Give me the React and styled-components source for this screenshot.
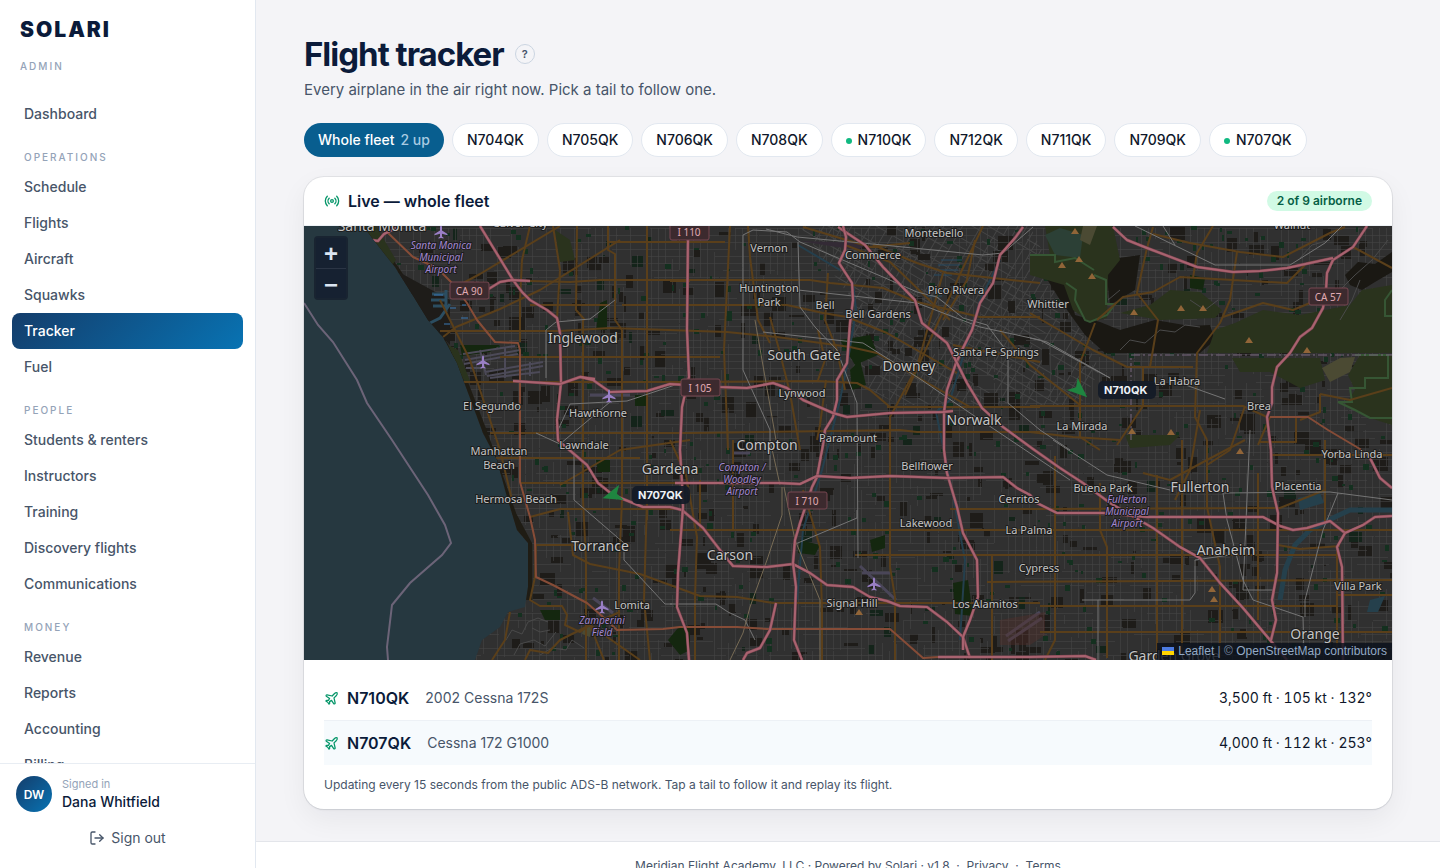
import { useState } from "react";
import styled, { createGlobalStyle } from "styled-components";
import { LogOut, Plane, Radio } from "lucide-react";

const GlobalStyle = createGlobalStyle`
  * {
    box-sizing: border-box;
  }
  body {
    margin: 0;
    font-family: Inter, "Liberation Sans", sans-serif;
    font-size: 14px;
    color: #0f172a;
    background: #f4f4f7;
  }
  button {
    font: inherit;
    cursor: pointer;
  }
  a {
    color: inherit;
    text-decoration: none;
  }
`;

const Shell = styled.div`
  display: grid;
  grid-template-columns: 256px 1fr;
  height: 100vh;
`;

const Sidebar = styled.aside`
  display: flex;
  flex-direction: column;
  min-height: 0;
  background: #fff;
  border-right: 1px solid #e2e8f0;
`;

const Brand = styled.div`
  padding: 16px 20px;
`;

const Wordmark = styled.div`
  font-size: 21px;
  font-weight: 900;
  line-height: 28px;
  letter-spacing: 2px;
  color: #0b1b3a;
`;

const Role = styled.div`
  margin-top: 14px;
  font-size: 10px;
  font-weight: 500;
  line-height: 16px;
  letter-spacing: 2px;
  color: #94a3b8;
`;

const Nav = styled.nav`
  flex: 1;
  min-height: 0;
  padding: 6px 12px;
  overflow-y: auto;
  scrollbar-width: none;
`;

const NavHeading = styled.h2`
  margin: 0;
  padding: 18px 12px 4px;
  font-size: 10px;
  font-weight: 500;
  line-height: 15px;
  letter-spacing: 2px;
  color: #94a3b8;
`;

const NavLink = styled.a`
  display: block;
  padding: 8px 12px;
  border-radius: 8px;
  font-weight: 500;
  line-height: 20px;
  color: ${(props) => (props.$active ? "#fff" : "#475569")};
  background: ${(props) =>
    props.$active ? "linear-gradient(135deg, #143d6b, #0873b3)" : "none"};
`;

const Account = styled.div`
  height: 105px;
  padding: 12px 16px;
  border-top: 1px solid #e8edf3;
`;

const AccountRow = styled.div`
  display: flex;
  align-items: center;
  gap: 10px;
`;

const Avatar = styled.div`
  display: grid;
  place-items: center;
  width: 36px;
  height: 36px;
  border-radius: 50%;
  font-size: 12px;
  font-weight: 600;
  color: #fff;
  background: linear-gradient(135deg, #143d6b, #0873b3);
`;

const SignedIn = styled.div`
  font-size: 11px;
  line-height: 16px;
  color: #94a3b8;
`;

const UserName = styled.div`
  font-weight: 500;
  line-height: 20px;
  color: #0b1b3a;
`;

const SignOut = styled.button`
  display: flex;
  align-items: center;
  justify-content: center;
  gap: 6px;
  width: 100%;
  margin-top: 8px;
  padding: 8px;
  border: 0;
  line-height: 20px;
  color: #475569;
  background: none;
`;

const Main = styled.div`
  display: flex;
  flex-direction: column;
  min-width: 0;
  overflow-y: auto;
  scrollbar-width: none;
`;

const Content = styled.main`
  padding: 32px 48px;
`;

const TitleRow = styled.div`
  display: flex;
  align-items: center;
  gap: 11px;
`;

const Title = styled.h1`
  margin: 0;
  font-size: 33px;
  font-weight: 700;
  line-height: 44px;
  letter-spacing: -1px;
  color: #0b1b3a;
`;

const HelpButton = styled.button`
  width: 20px;
  height: 20px;
  padding: 0;
  border: 1px solid #cbd5e1;
  border-radius: 50%;
  font-size: 11px;
  font-weight: 600;
  line-height: 18px;
  color: #475569;
  background: none;
`;

const Subtitle = styled.p`
  margin: 3px 0 22px;
  font-size: 15px;
  font-variation-settings: "opsz" 24;
  line-height: 22px;
  color: #475569;
`;

const Chips = styled.div`
  display: flex;
  flex-wrap: wrap;
  gap: 8px;
  margin-bottom: 20px;
`;

const Chip = styled.button`
  display: flex;
  align-items: center;
  gap: 6px;
  height: 34px;
  padding: 0 14px 1px;
  border: ${(props) => (props.$active ? "0" : "1px solid #e2e8f0")};
  border-radius: 17px;
  font-weight: 500;
  line-height: 20px;
  color: ${(props) => (props.$active ? "#fff" : "#0f172a")};
  background: ${(props) => (props.$active ? "#085e8f" : "#fff")};
`;

const ChipCount = styled.span`
  color: #a9cbe2;
`;

const LiveDot = styled.span`
  width: 6px;
  height: 6px;
  margin-top: 2px;
  border-radius: 50%;
  background: #10b981;
`;

const Card = styled.section`
  overflow: hidden;
  border-radius: 20px;
  background: #fff;
  box-shadow: 0 0 0 1px rgba(15, 23, 42, 0.07), 0 1px 2px rgba(15, 23, 42, 0.08),
    0 10px 28px rgba(15, 23, 42, 0.06);
`;

const CardHeader = styled.header`
  display: flex;
  align-items: center;
  gap: 8px;
  height: 49px;
  padding: 0 20px;
  border-bottom: 1px solid #eef2f6;
  color: #059669;
`;

const CardTitle = styled.h2`
  flex: 1;
  margin: 0;
  font-size: 16px;
  font-weight: 600;
  line-height: 24px;
  color: #0b1b3a;
`;

const Badge = styled.span`
  padding: 0 10px;
  border-radius: 10px;
  font-size: 12px;
  font-weight: 600;
  line-height: 20px;
  color: #065f46;
  background: #d1fae5;
`;

const MapFrame = styled.div`
  position: relative;
  height: 434px;
  background: #263840;
`;

const MapSvg = styled.svg`
  display: block;
  width: 100%;
  height: 100%;
`;

const MapText = styled.text`
  font-family: "Noto Sans", sans-serif;
  font-size: ${(props) => props.$size || 11}px;
  font-style: ${(props) => (props.$airport ? "italic" : "normal")};
  fill: ${(props) => (props.$airport ? "#a387cf" : "#c4c4c4")};
  stroke: #1c1c1c;
  stroke-width: 2px;
  stroke-linejoin: round;
  paint-order: stroke;
  text-anchor: middle;
`;

const ShieldText = styled.text`
  font-family: "Noto Sans", sans-serif;
  font-size: 10px;
  fill: #e0aab3;
  text-anchor: middle;
`;

const TailText = styled.text`
  font-family: Inter, sans-serif;
  font-size: 11px;
  font-weight: 700;
  fill: #eef2f7;
`;

const ZoomControl = styled.div`
  position: absolute;
  top: 10px;
  left: 10px;
  display: flex;
  flex-direction: column;
  border: 2px solid rgba(20, 29, 43, 0.7);
  border-radius: 4px;
`;

const ZoomButton = styled.button`
  width: 30px;
  height: 30px;
  padding: 2px 0 0;
  border: 0;
  font: bold 24px/28px "Liberation Sans", Arial, sans-serif;
  color: #dbe6f3;
  background: #162131;

  & + & {
    border-top: 1px solid #2b3545;
  }
`;

const Attribution = styled.div`
  position: absolute;
  right: 0;
  bottom: 0;
  padding: 0 5px;
  font: 12px/17px "Liberation Sans", Arial, sans-serif;
  color: #7688a0;
  background: rgba(11, 17, 28, 0.82);

  a {
    color: #93aac6;
  }
  svg {
    margin-right: 4px;
  }
`;

const Fleet = styled.ul`
  margin: 0;
  padding: 16px 20px 0;
  list-style: none;
`;

const FleetRow = styled.li`
  display: flex;
  align-items: center;
  gap: 16px;
  height: 44px;
  line-height: 20px;

  & + & {
    height: 45px;
    border-top: 1px solid #edf1f6;
    background: #f6fafd;
  }
`;

const TailButton = styled.button`
  display: flex;
  align-items: center;
  gap: 8px;
  padding: 0;
  border: 0;
  font-size: 16px;
  font-weight: 600;
  color: #0b1b3a;
  background: none;

  svg {
    color: #059669;
  }
`;

const Model = styled.span`
  flex: 1;
  color: #475569;
`;

const Telemetry = styled.span`
  font-variant-numeric: tabular-nums;
`;

const Note = styled.p`
  margin: 0;
  padding: 12px 20px 16px;
  font-size: 12px;
  line-height: 16px;
  color: #475569;
`;

const Footer = styled.footer`
  padding: 16px;
  border-top: 1px solid #e3e5ea;
  font-size: 12px;
  line-height: 16px;
  text-align: center;
  white-space: pre;
  color: #475569;
  background: #fff;
`;

const navGroups = [
  { items: ["Dashboard"] },
  {
    title: "OPERATIONS",
    items: ["Schedule", "Flights", "Aircraft", "Squawks", "Tracker", "Fuel"],
  },
  {
    title: "PEOPLE",
    items: [
      "Students & renters",
      "Instructors",
      "Training",
      "Discovery flights",
      "Communications",
    ],
  },
  { title: "MONEY", items: ["Revenue", "Reports", "Accounting", "Billing"] },
];

const tails = [
  "N704QK",
  "N705QK",
  "N706QK",
  "N708QK",
  "N710QK",
  "N712QK",
  "N711QK",
  "N709QK",
  "N707QK",
];

const airborne = [
  { tail: "N710QK", model: "2002 Cessna 172S", alt: "3,500", kt: 105, hdg: 132, x: 1079, y: 390 },
  { tail: "N707QK", model: "Cessna 172 G1000", alt: "4,000", kt: 112, hdg: 253, x: 613, y: 495 },
];

const land =
  "M363 226L380 248L395 267L412 294L428 320L443 337L450 350L457 363L467 390L483 433L497 460L507 497L517 530L528 543L528 587L525 607L508 612L500 627L482 640L475 660H1392V226Z";

const freeways = [
  "M480 226L513 280L522 292L530 300L547 310L557 318L560 333L561 383L557 420L558 440L567 448L587 465L598 483L613 495L643 507L670 507L682 510L703 528L720 550L733 566L767 567L793 564L810 573L827 585L853 587L870 597L887 601L900 606L927 607L947 622L963 637L970 658",
  "M1023 227L1015 238L1000 255L993 283L980 303L972 330L963 348L956 363L947 390L944 412V450L947 473L957 507L963 533L977 560L978 597L970 620L963 637V650",
  "M838 227L865 245L883 267L915 300L922 323L947 343L957 363L967 383L982 408L1003 427L1033 449L1060 468L1083 483L1110 503L1153 528L1180 547L1200 558L1220 583L1243 608L1270 640L1287 660",
  "M843 226L846 237L845 250L839 263L852 283L853 300L850 323L847 363L837 380V400L833 417L825 430L823 445L817 477L812 487L800 523L795 540L793 563L796 587L794 640L802 660",
  "M688 240L687 330L689 377L682 407L680 450L682 483L683 507L678 573L677 607L687 633L689 660",
  "M513 381L560 384L580 377L595 379M580 377L593 380L610 392L647 391L670 384L720 387L747 388L773 383L787 388L803 400L833 413L847 417L890 413L943 412L953 411",
  "M675 483H780L800 484L817 476L850 478L890 476L947 478L1003 477L1017 488L1030 495L1037 503L1057 513H1103L1147 517H1263L1280 526L1293 530L1307 528L1330 521L1345 533L1363 525L1375 517L1392 516",
  "M1345 533L1337 547L1342 567L1343 660",
  "M1367 226L1353 247L1333 260L1327 273L1326 290L1323 308L1312 328L1300 337L1290 353L1277 367L1272 387V403L1267 417L1271 450L1272 487L1278 513L1277 573L1272 600L1276 620L1271 640",
  "M1113 227L1127 240L1147 248L1197 267L1233 272L1260 271L1287 268L1333 258",
  "M1370 458L1380 478L1392 488",
  "M776 603L770 630L760 648L747 653L743 660",
  "M487 290L500 282L512 280L530 281",
  "M372 240L378 241L384 234L396 228",
  "M938 657H1030L1085 656L1096 660",
];

const highways = [
  "M386 231L413 257L437 268L452 283L467 303L477 320L495 342L518 343L520 350V482L530 517L535 540L536 577L553 585L587 603L603 617L617 630L663 629L680 627L737 627L767 629H890L923 658L938 657",
  "M1270 417H1308L1328 430L1360 449L1370 458",
];

const arterials = [
  "M530 226L522 260L520 300V342M553 226L560 270L557 318M577 226L576 310L585 320M608 226V250L615 254V320L622 330M647 226V520M583 320V500L586 560V660M622 330V500L619 570V660M647 500L644 600L650 660M730 226L724 350L728 450M748 226L750 257L758 320L770 343",
  "M607 242H725M690 281H670M530 281L570 282L600 280H810L830 283L883 288L917 302L980 317H1040M530 305H610M622 305H787L823 313L847 317L887 333L957 373",
  "M443 337L456 327L500 309L540 290L620 240M440 331H560L610 328L727 332L777 337L850 347L877 353L917 377L970 407M500 357H720M462 382L680 382L817 381L857 383L870 390L890 407",
  "M490 433H690L900 430L917 432H1040M496 458H640M520 483H680M530 517L560 509H675M568 512L573 555L590 564L640 574L700 596L737 597L773 603H1040M536 545H584M560 485L620 450L690 440",
  "M450 290L480 274L560 226M440 300L470 360L490 420L500 450L512 500M887 407H1040M943 273L917 367L890 417V480M770 317L780 353L790 393L800 450M828 273L825 320L837 350L845 390",
  "M803 227L870 247L910 243M873 245L917 263L947 273L1040 283M975 240L967 280L943 320M845 245L890 262L950 320M818 380L825 360L818 330M817 440L820 425L826 380",
  "M983 226L962 270L930 340L905 395M1000 330L1030 365L1080 405M953 345L1040 362M1030 313L1093 350L1127 367H1193",
  "M1153 227L1147 248L1137 293L1158 320L1150 367M1213 226L1197 253L1193 278M1237 252L1230 300L1220 323L1197 353L1195 417L1207 440M1097 320L1123 297L1153 292L1180 277L1233 280L1287 283L1307 263L1333 258M1095 323L1080 363V437L1100 450",
  "M1030 406H1243L1267 417M1030 432L1073 437L1120 440M1143 367V406L1117 445M1223 317L1263 303L1293 310L1310 303M1153 234L1190 243L1240 252L1283 257L1330 233L1345 227M1353 247L1392 268M1320 394L1350 400L1392 388M1320 394V412L1300 420",
  "M670 530H1392M855 555H1337M987 582L1392 580M950 509H1040L1280 508L1325 490M1040 606H1337M1040 632H1392M700 480V530M733 440V530M803 490L820 547L822 610V660M890 447V567L895 597V660M992 555V660M670 440L686 475L697 537L695 597V660",
  "M1055 456V640L1045 660M1100 483V530L1107 547V658M1157 475V658M1182 440V658M1207 440V507L1220 567V658M1258 473V620M1337 546V656M1325 440V523M1143 473L1170 480L1207 460L1245 440M1270 455L1392 455M1278 545L1300 549L1340 546M1337 595H1392",
  "M536 545L535 577L530 600L540 606H562L567 615L565 625L580 632L590 625L620 612M510 612L505 640L492 660M525 660L530 650L548 653L560 640L590 625L604 660M590 625L640 660M1200 410L1190 470L1175 500M1245 406L1230 450L1207 465M1270 417L1258 445M1296 417V442H1260",
];

const rails = [
  "M743 370V235L753 230L787 232L800 242L883 277L917 292L937 297L963 318L987 325L1008 353V403L1040 430L1070 450",
  "M766 229L797 237L883 245L983 255L1003 253L1033 227M798 242L800 307L815 327L837 350L857 403L858 558M743 370L770 430V470M798 290L917 303L980 327L1040 340L1110 378M763 332L863 343L917 377L970 413L1070 480",
  "M1053 440L1107 475L1170 490M1223 493L1330 492L1392 500M1223 493L1227 520L1243 580L1253 600L1303 617L1304 660M1338 493L1323 530L1305 600V617M1082 600H1190L1195 593V560L1230 555M1098 600V660",
  "M546 378V330L556 322L590 319L615 300M558 430L570 404L627 401L678 384M536 433L560 444L610 402M574 455V500L624 543V560L665 604H672M858 555M793 545L857 518V510M670 604H716L728 612L745 620L755 640",
  "M1135 226L1215 265H1290L1325 243L1342 226M1163 226L1175 245M1030 338L1047 342L1110 378M1180 383L1225 399M1250 430L1243 590L1274 590",
];

const paleRails = [
  "M782 487V515L767 560L750 607L743 633L730 660M770 440L780 485M784 487L795 540L820 600V660M755 320L776 440",
];

// winding residential streets in the Palos Verdes and Puente hills
const hillRoads = [
  "M506 640L512 630L522 634L528 622L538 618L548 622M514 655L520 644L534 640L545 646L556 632M540 655L552 648L566 650L572 640L584 648M532 628L540 632L550 630",
  "M1120 350L1130 340L1145 343L1160 330L1175 332L1185 325L1200 327M1108 300L1120 290M1190 300L1205 310L1218 300M1340 290L1355 275L1372 260L1388 240M1300 258L1312 245L1330 240M1340 320L1352 300L1360 280",
];

const parks = [
  "M1045 226H1113L1120 260L1108 275L1107 318L1090 322L1073 310L1064 285L1030 275V255H1050Z",
  "M1207 353L1215 330L1235 323L1263 310L1300 315L1350 305L1362 290L1392 285V353Z",
  "M1232 358H1320L1325 380L1300 388L1270 372H1240Z",
  "M1360 355H1392V425L1370 418L1345 405L1355 390L1348 375Z",
  "M1120 313L1150 305L1170 290L1200 292L1222 310L1215 318L1160 320Z",
  "M448 345L458 350L470 381L464 381Z",
  "M364 226H376L396 260L390 268Z",
  "M1125 435H1180L1170 445L1130 448Z",
  "M555 230L570 240L575 260L560 262Z",
];

const woods = [
  "M600 303L607 300V330H596Z",
  "M840 340L870 335L878 355L855 365Z",
  "M800 540L820 545L815 555L798 553Z",
  "M953 583L968 580L973 616L955 614Z",
  "M1190 275L1205 278L1203 290L1190 288Z",
  "M635 395H647V406H635Z",
  "M596 460H610V472H598Z",
  "M540 610H560V620H545Z",
  "M668 640L678 628H690V650L680 655Z",
  "M850 370L860 360L866 385L852 390Z",
  "M460 345H500L490 352L462 356Z",
  "M870 540L885 535V548L872 552Z",
];

const darkHills = [
  "M1040 268L1068 282L1075 315L1100 322L1120 330L1155 320L1190 326L1210 325L1215 340L1200 353H1105L1085 335L1060 300Z",
  "M1105 260L1140 255L1135 290L1110 305Z",
  "M1345 275L1358 262L1375 264L1392 252V272L1375 282L1362 290L1350 285Z",
  "M1360 380L1375 388L1365 400Z",
];

const labels = [
  ["Santa Monica", 382, 231, 14],
  ["Culver City", 520, 227, 11],
  ["Inglewood", 583, 343, 14],
  ["El Segundo", 492, 410, 11],
  ["Hawthorne", 598, 417, 11],
  ["Lawndale", 584, 449, 11],
  ["Manhattan", 499, 455, 11],
  ["Beach", 499, 469, 11],
  ["Hermosa Beach", 516, 503, 11],
  ["Torrance", 600, 551, 14],
  ["Lomita", 632, 609, 11],
  ["Gardena", 670, 474, 14],
  ["Carson", 730, 560, 14],
  ["Compton", 767, 450, 14],
  ["Vernon", 769, 252, 11],
  ["Huntington", 769, 292, 11],
  ["Park", 769, 306, 11],
  ["Bell", 825, 309, 11],
  ["Bell Gardens", 878, 318, 11],
  ["South Gate", 804, 360, 14],
  ["Commerce", 873, 259, 11],
  ["Montebello", 934, 237, 11],
  ["Pico Rivera", 956, 294, 11],
  ["Whittier", 1048, 308, 11],
  ["Santa Fe Springs", 996, 356, 11],
  ["Downey", 909, 371, 14],
  ["Lynwood", 802, 397, 11],
  ["Paramount", 848, 442, 11],
  ["Norwalk", 974, 425, 14],
  ["Bellflower", 927, 470, 11],
  ["Cerritos", 1019, 503, 11],
  ["Lakewood", 926, 527, 11],
  ["La Palma", 1029, 534, 11],
  ["Cypress", 1039, 572, 11],
  ["Signal Hill", 852, 607, 11],
  ["Los Alamitos", 985, 608, 11],
  ["La Habra", 1177, 385, 11],
  ["La Mirada", 1082, 430, 11],
  ["Brea", 1259, 410, 11],
  ["Yorba Linda", 1352, 458, 11],
  ["Buena Park", 1103, 492, 11],
  ["Fullerton", 1200, 492, 14],
  ["Placentia", 1298, 490, 11],
  ["Anaheim", 1226, 555, 14],
  ["Villa Park", 1358, 590, 11],
  ["Orange", 1315, 639, 14],
  ["Garden Grove", 1174, 661, 14],
  ["Walnut", 1292, 229, 11],
];

const airportLabels = [
  ["Santa Monica", 441, 249],
  ["Municipal", 441, 261],
  ["Airport", 441, 273],
  ["Compton /", 742, 471],
  ["Woodley", 742, 483],
  ["Airport", 742, 495],
  ["Zamperini", 602, 624],
  ["Field", 602, 636],
  ["Fullerton", 1127, 503],
  ["Municipal", 1127, 515],
  ["Airport", 1127, 527],
];

const shields = [
  ["I 110", 689, 232],
  ["CA 90", 469, 291],
  ["I 105", 700, 388],
  ["I 710", 807, 501],
  ["CA 57", 1328, 297],
];

const airports = [
  [441, 232],
  [483, 362],
  [609, 396],
  [602, 607],
  [874, 584],
];

const peaks = [
  [1075, 231], [1062, 265], [1079, 259], [1092, 276], [1134, 312], [1181, 308],
  [1203, 308], [1249, 340], [1307, 350], [1132, 431], [1171, 432], [1240, 451],
  [1212, 589], [1214, 599], [859, 612],
];

// small seeded generator so that the side streets are the same on each load
function seeded(seed) {
  let s = seed;
  return () => {
    s = (s * 16807) % 2147483647;
    return s / 2147483647;
  };
}

function streetMesh(seed, x0, y0, x1, y1, step) {
  const rand = seeded(seed);
  let d = "";
  for (let y = y0; y < y1; y += step) {
    for (let x = x0; x < x1; ) {
      const len = 10 + rand() * 60;
      if (rand() > 0.35) d += `M${Math.round(x)} ${y + 0.5}h${Math.round(len)}`;
      x += len;
    }
  }
  for (let x = x0; x < x1; x += step) {
    for (let y = y0; y < y1; ) {
      const len = 8 + rand() * 45;
      if (rand() > 0.35) d += `M${x + 0.5} ${Math.round(y)}v${Math.round(len)}`;
      y += len;
    }
  }
  return d;
}

function blocks(seed, count, max) {
  const rand = seeded(seed);
  let d = "";
  for (let i = 0; i < count; i++) {
    const x = Math.round(370 + rand() * 1020);
    const y = Math.round(226 + rand() * 434);
    const w = Math.round(2 + rand() * max);
    const h = Math.round(2 + rand() * max);
    d += `M${x} ${y}h${w}v${h}h${-w}z`;
  }
  return d;
}

const mesh = streetMesh(7, 364, 228, 1392, 660, 7);
const slantMesh = streetMesh(23, -220, -170, 220, 170, 8);
const darkBlocks = blocks(11, 560, 14);
const greenBlocks = blocks(31, 480, 4);
const greenFields = blocks(57, 60, 11);

function FleetMap() {
  return (
    <MapSvg viewBox="304 226 1088 434" preserveAspectRatio="xMidYMid slice">
      <defs>
        <clipPath id="land">
          <path d={land} />
        </clipPath>
        <clipPath id="southeast">
          <path d="M800 226H1030L1100 370L1080 405H900L850 380L852 300Z" />
        </clipPath>
      </defs>
      <rect x="304" y="226" width="1088" height="434" fill="#263840" />
      <path d={land} fill="#303030" />
      <g clipPath="url(#land)">
        <g clipPath="url(#southeast)">
          <g transform="translate(940 320) rotate(30)">
            <path d={slantMesh} stroke="#454545" fill="none" />
          </g>
        </g>
        <path d={darkBlocks} fill="#1e1c19" />
        <path d={greenFields} fill="#14241a" />
        <path d={mesh} stroke="#454545" fill="none" opacity="0.6" />
        <path d={greenBlocks} fill="#14301f" />
        <path d="M362 226L395 270L428 322L457 366L483 433L512 515L528 545V600" stroke="#1f1c14" strokeWidth="9" fill="none" />
        <path d="M395 270L450 300L450 345L428 322Z" fill="#1e1c19" />
        {darkHills.map((d) => (
          <path key={d} d={d} fill="#1a1813" />
        ))}
        {parks.map((d) => (
          <path key={d} d={d} fill="#2a331d" />
        ))}
        {woods.map((d) => (
          <path key={d} d={d} fill="#14270f" />
        ))}
        <path d="M1045 235L1060 228L1083 235L1080 258L1055 255Z" fill="#2c4036" />
        <path d="M1083 226H1097L1090 245L1080 240ZM1322 368L1340 358L1355 357L1350 372L1330 382ZM583 628L592 625L590 637L582 634Z" fill="#4b4a33" />
        <path d="M1030 255H1055V262L1075 258L1094 270M1094 275L1106 280V304H1115L1107 315L1090 322L1085 320L1075 300L1076 290L1066 283" stroke="#365634" strokeWidth="2" fill="none" />
        <path d="M1355 355H1388V378H1365V388H1350L1352 402H1338L1355 410L1370 418H1392M1392 290L1385 300V316H1392" stroke="#365634" strokeWidth="2" fill="none" />
        <path d="M1131 440V355H1392" stroke="#79677f" strokeDasharray="9 3 2 3" fill="none" />
        <path d="M853 283L856 310L848 360L840 400L822 470L803 530L797 600M1000 260L980 300L950 400L936 412L950 480L965 560L960 640M798 245L840 270" stroke="#243f4d" strokeWidth="2" fill="none" />
        <path d="M1280 600L1285 570L1295 545L1310 530L1335 517L1350 510H1392" stroke="#25404c" strokeWidth="5" fill="none" />
        <path d="M1298 498L1320 493L1324 503L1300 510ZM1370 600L1385 596L1378 612H1367Z" fill="#25404c" />
        <path d="M941 260H962M938 265H960M936 270H958M934 275H952M928 290H944M926 296H942" stroke="#264a63" />
        <path d="M428 324L440 318L450 304M432 294H446M431 300H447M433 306H445M446 290V312" stroke="#2b4d60" strokeWidth="3" fill="none" />
        <path d="M434 295H443M450 308H456M444 324H450M461 318H468M462 305H466" stroke="#3b78b4" />
        <path d="M463 354L515 346M465 360L520 350M464 364L518 354M485 372L543 362M487 376L543 366M490 378L540 372M466 368H482M480 350L486 375M505 348V378M530 362V376" stroke="#4c4a58" strokeWidth="2" />
        <path d="M590 395H630M593 598L613 613M860 566L896 600M862 573H890M734 453H750M1006 636L1040 612M1008 641L1042 618" stroke="#4a4658" strokeWidth="3" />
        <path d="M1000 620L1045 612V635L1030 645H1000Z" fill="#55302a" opacity="0.4" />
        <path d="M800 241L868 243L858 250L830 246Z" fill="#332a35" />
        {hillRoads.map((d) => (
          <path key={d} d={d} stroke="#4a4a4a" fill="none" />
        ))}
        {arterials.map((d) => (
          <path key={d} d={d} stroke="#5a3f1a" strokeWidth="2" strokeLinejoin="round" fill="none" />
        ))}
        {rails.map((d) => (
          <path key={d} d={d} stroke="#757575" strokeWidth="1" fill="none" />
        ))}
        {paleRails.map((d) => (
          <path key={d} d={d} stroke="#776b55" strokeWidth="1" fill="none" />
        ))}
        {highways.map((d) => (
          <path key={d} d={d} stroke="#864c37" strokeWidth="2" strokeLinejoin="round" fill="none" />
        ))}
        {freeways.map((d) => (
          <g key={d} fill="none" strokeLinejoin="round">
            <path d={d} stroke="#7a434e" strokeWidth="3" />
            <path d={d} stroke="#a96370" strokeWidth="2" />
          </g>
        ))}
      </g>
      <path
        d="M304 303L318 325L333 342L357 380L367 403L392 440L428 495L445 525L451 543L442 555L410 583L392 605L387 647L388 660"
        stroke="#6c6478"
        strokeWidth="2"
        fill="none"
      />
      {peaks.map(([x, y]) => (
        <path key={`${x}-${y}`} d={`M${x} ${y - 3}l4 6h-8z`} fill="#916538" />
      ))}
      {airports.map(([x, y]) => (
        <path
          key={x}
          transform={`translate(${x} ${y})`}
          d="M0-6.500C.8-6.500 1-5.500 1-4.500V-1.500L6.500 2V3.200L1 1.700V4.500L2.600 5.800V6.600L0 6L-2.600 6.600V5.800L-1 4.500V1.700L-6.500 3.200V2L-1-1.500V-4.500C-1-5.500-.8-6.500 0-6.500Z"
          fill="#9a7fc6"
        />
      ))}
      {labels.map(([name, x, y, size]) => (
        <MapText key={name} x={x} y={y} $size={size}>
          {name}
        </MapText>
      ))}
      {airportLabels.map(([name, x, y]) => (
        <MapText key={`${name}-${x}`} x={x} y={y} $size={10} $airport>
          {name}
        </MapText>
      ))}
      {shields.map(([name, x, y]) => (
        <g key={name}>
          <rect x={x - 19} y={y - 9} width="39" height="17" rx="2" fill="#3c2a2e" stroke="#774651" />
          <ShieldText x={x} y={y + 4}>
            {name}
          </ShieldText>
        </g>
      ))}
      {airborne.map((plane) => (
        <g key={plane.tail} transform={`translate(${plane.x} ${plane.y})`}>
          <path d="M0-11L8 9L0 4L-8 9Z" transform={`rotate(${plane.hdg})`} fill="#1f8540" />
          <rect x="19" y="-9" width="58" height="18" rx="5" fill="#141b27" fillOpacity="0.92" />
          <TailText x="25" y="4">
            {plane.tail}
          </TailText>
        </g>
      ))}
    </MapSvg>
  );
}

function App() {
  const [selected, setSelected] = useState("all");

  return (
    <>
      <GlobalStyle />
      <Shell>
        <Sidebar>
          <Brand>
            <Wordmark>SOLARI</Wordmark>
            <Role>ADMIN</Role>
          </Brand>
          <Nav>
            {navGroups.map((group) => (
              <div key={group.title || "home"}>
                {group.title && <NavHeading>{group.title}</NavHeading>}
                {group.items.map((item) => (
                  <NavLink key={item} href="#" $active={item === "Tracker"}>
                    {item}
                  </NavLink>
                ))}
              </div>
            ))}
          </Nav>
          <Account>
            <AccountRow>
              <Avatar>DW</Avatar>
              <div>
                <SignedIn>Signed in</SignedIn>
                <UserName>Dana Whitfield</UserName>
              </div>
            </AccountRow>
            <SignOut>
              <LogOut size={16} />
              Sign out
            </SignOut>
          </Account>
        </Sidebar>
        <Main>
          <Content>
            <TitleRow>
              <Title>Flight tracker</Title>
              <HelpButton aria-label="Help">?</HelpButton>
            </TitleRow>
            <Subtitle>
              Every airplane in the air right now. Pick a tail to follow one.
            </Subtitle>
            <Chips>
              <Chip $active={selected === "all"} onClick={() => setSelected("all")}>
                Whole fleet <ChipCount>2 up</ChipCount>
              </Chip>
              {tails.map((tail) => (
                <Chip
                  key={tail}
                  $active={selected === tail}
                  onClick={() => setSelected(tail)}
                >
                  {airborne.some((plane) => plane.tail === tail) && <LiveDot />}
                  {tail}
                </Chip>
              ))}
            </Chips>
            <Card>
              <CardHeader>
                <Radio size={16} />
                <CardTitle>Live — whole fleet</CardTitle>
                <Badge>2 of 9 airborne</Badge>
              </CardHeader>
              <MapFrame>
                <FleetMap />
                <ZoomControl>
                  <ZoomButton aria-label="Zoom in">+</ZoomButton>
                  <ZoomButton aria-label="Zoom out">−</ZoomButton>
                </ZoomControl>
                <Attribution>
                  <a href="#">
                    <svg width="12" height="8" viewBox="0 0 12 8">
                      <path fill="#4c7be1" d="M0 0h12v4H0z" />
                      <path fill="#ffd500" d="M0 4h12v4H0z" />
                    </svg>
                    Leaflet
                  </a>{" "}
                  | © <a href="#">OpenStreetMap contributors</a>
                </Attribution>
              </MapFrame>
              <Fleet>
                {airborne.map((plane) => (
                  <FleetRow key={plane.tail}>
                    <TailButton onClick={() => setSelected(plane.tail)}>
                      <Plane size={15} />
                      {plane.tail}
                    </TailButton>
                    <Model>{plane.model}</Model>
                    <Telemetry>
                      {plane.alt} ft · {plane.kt} kt · {plane.hdg}°
                    </Telemetry>
                  </FleetRow>
                ))}
              </Fleet>
              <Note>
                Updating every 15 seconds from the public ADS-B network. Tap a
                tail to follow it and replay its flight.
              </Note>
            </Card>
          </Content>
          <Footer>
            {"Meridian Flight Academy, LLC · Powered by Solari · v1.8  ·  "}
            <a href="#">Privacy</a>
            {"  ·  "}
            <a href="#">Terms</a>
          </Footer>
        </Main>
      </Shell>
    </>
  );
}

export default App;
